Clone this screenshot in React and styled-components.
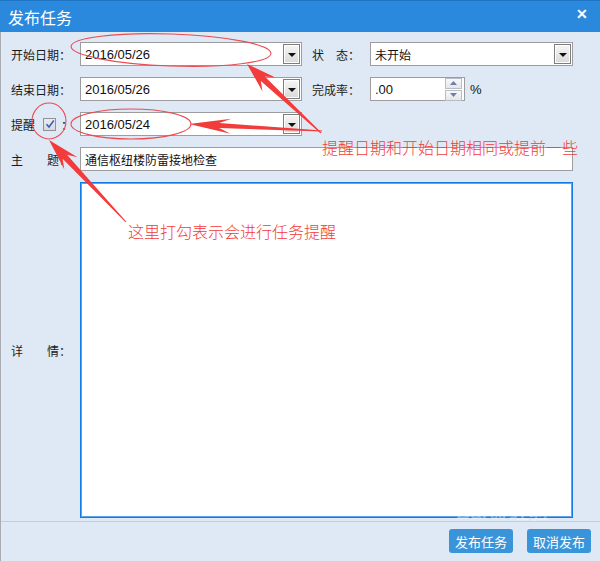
import React from 'react';
import styled, { createGlobalStyle } from 'styled-components';

const GlobalStyle = createGlobalStyle`
  html, body { margin: 0; padding: 0; }
  body {
    font-family: "Noto Sans CJK SC", "Liberation Sans", sans-serif;
    background: #dfe9f5;
  }
`;

const CJK = '"Noto Sans CJK SC", "Liberation Sans", sans-serif';
const LATIN = '"Liberation Sans", "Noto Sans CJK SC", sans-serif';

// arrow polygon with swept-back barbs, points computed from tail/tip
const arrowPoints = (tail, tip, headLen, headW, shaftW, tailW) => {
  const dx = tip[0] - tail[0];
  const dy = tip[1] - tail[1];
  const len = Math.hypot(dx, dy);
  const ux = dx / len, uy = dy / len;
  const nx = -uy, ny = ux;
  const jx = tip[0] - ux * headLen * 0.72, jy = tip[1] - uy * headLen * 0.72;
  const bx = tip[0] - ux * headLen, by = tip[1] - uy * headLen;
  const p = (x, y) => `${x.toFixed(1)},${y.toFixed(1)}`;
  return [
    p(tail[0] + nx * tailW / 2, tail[1] + ny * tailW / 2),
    p(jx + nx * shaftW / 2, jy + ny * shaftW / 2),
    p(bx + nx * headW / 2, by + ny * headW / 2),
    p(tip[0], tip[1]),
    p(bx - nx * headW / 2, by - ny * headW / 2),
    p(jx - nx * shaftW / 2, jy - ny * shaftW / 2),
    p(tail[0] - nx * tailW / 2, tail[1] - ny * tailW / 2),
  ].join(' ');
};

const Arrow = ({ d }) => (
  <polygon points={arrowPoints(...d)} fill="#f23b3b" />
);

const App = () => {
  return (
    <>
      <GlobalStyle />
      <Window>
        <TitleBar>
          <Title>发布任务</Title>
          <Close>✕</Close>
        </TitleBar>
        <Body>
          <Form>
            <Label>
              <Spread w={48}><span>开</span><span>始</span><span>日</span><span>期</span></Spread>：
            </Label>
            <Field>
              <FieldText>2016/05/26</FieldText>
              <DropButton><Caret /></DropButton>
            </Field>
            <span />
            <Label>
              <Spread w={36}><span>状</span><span>态</span></Spread>：
            </Label>
            <Field>
              <FieldText cjk>未开始</FieldText>
              <DropButton><Caret /></DropButton>
            </Field>

            <Label>
              <Spread w={48}><span>结</span><span>束</span><span>日</span><span>期</span></Spread>：
            </Label>
            <Field>
              <FieldText>2016/05/26</FieldText>
              <DropButton><Caret /></DropButton>
            </Field>
            <span />
            <Label>
              <Spread w={36}><span>完</span><span>成</span><span>率</span></Spread>：
            </Label>
            <SpinRow>
              <Field w={95}>
                <FieldText>.00</FieldText>
                <Spinner>
                  <SpinBtn>
                    <svg width="7" height="4" viewBox="0 0 7 4"><path d="M0 4 L3.5 0 L7 4Z" fill="#6c7fae" /></svg>
                  </SpinBtn>
                  <SpinBtn>
                    <svg width="7" height="4" viewBox="0 0 7 4"><path d="M0 0 L3.5 4 L7 0Z" fill="#6c7fae" /></svg>
                  </SpinBtn>
                </Spinner>
              </Field>
              <Percent>%</Percent>
            </SpinRow>

            <Label>
              提醒
              <CheckBox>
                <svg width="10" height="10" viewBox="0 0 10 10">
                  <path d="M1.5 5.2 L4 8 L8.8 1.5" fill="none" stroke="#3d5fb8" strokeWidth="1.6" />
                </svg>
              </CheckBox>
              ：
            </Label>
            <Field>
              <FieldText>2016/05/24</FieldText>
              <DropButton><Caret /></DropButton>
            </Field>
            <Filler />

            <Label>
              <Spread w={48}><span>主</span><span>题</span></Spread>：
            </Label>
            <Field span>
              <FieldText cjk>通信枢纽楼防雷接地检查</FieldText>
            </Field>

            <Label>
              <Spread w={48}><span>详</span><span>情</span></Spread>：
            </Label>
            <TextArea />
          </Form>
          <Footer>
            <Button>发布任务</Button>
            <Button>取消发布</Button>
          </Footer>
        </Body>

        <Watermark>
          <span>Bai</span><Paw>du</Paw><span>经验</span>
        </Watermark>

        <Overlay width="600" height="561" viewBox="0 0 600 561">
          <g fill="none" stroke="#ea4a52" strokeWidth="1.1">
            <ellipse cx="171" cy="50" rx="100" ry="16" transform="rotate(2 171 50)" />
            <ellipse cx="131" cy="124" rx="60" ry="15" />
            <ellipse cx="49" cy="121" rx="17" ry="18" />
          </g>
          <Arrow d={[[321, 133], [247, 64], 30, 19, 6, 1]} />
          <Arrow d={[[322, 131], [189, 124], 42, 15, 5, 1]} />
          <Arrow d={[[126, 222], [49, 140], 32, 18, 6, 1]} />
        </Overlay>
        <Note1>提醒日期和开始日期相同或提前一些</Note1>
        <Note2>这里打勾表示会进行任务提醒</Note2>
      </Window>
    </>
  );
};

export default App;

// STYLED CSS
const Window = styled.div`
  position: relative;
  width: 600px;
  height: 561px;
  display: flex;
  flex-direction: column;
  background: #dfe9f5;
  overflow: hidden;
`;

const TitleBar = styled.div`
  height: 32px;
  flex-shrink: 0;
  display: flex;
  align-items: center;
  justify-content: space-between;
  padding: 0 12px 0 8px;
  background: #2a89dd;
  border-top: 1px solid #1f74c4;
  box-sizing: border-box;
`;

const Title = styled.div`
  font-family: ${CJK};
  font-size: 16px;
  color: #ffffff;
`;

const Close = styled.div`
  font-family: ${LATIN};
  font-size: 14px;
  font-weight: bold;
  color: #ffffff;
  margin-top: -6px;
`;

const Body = styled.div`
  flex: 1;
  display: flex;
  flex-direction: column;
  border-left: 1px solid #a9adb3;
`;

const Form = styled.div`
  display: grid;
  grid-template-columns: 69px 222px 10px 58px 203px;
  grid-template-rows: 24px 24px 24px 24px 336px;
  row-gap: 11px;
  padding: 10px 0 0 10px;
  align-items: center;
`;

const Label = styled.div`
  display: flex;
  align-items: center;
  font-family: ${CJK};
  font-size: 12px;
  color: #1a1a1a;
  height: 100%;
`;

const Spread = styled.span`
  display: flex;
  justify-content: space-between;
  width: ${(p) => p.w}px;
`;

const Field = styled.div`
  display: flex;
  align-items: center;
  box-sizing: border-box;
  height: 24px;
  width: ${(p) => (p.w ? `${p.w}px` : 'auto')};
  grid-column: ${(p) => (p.span ? '2 / 6' : 'auto')};
  background: #ffffff;
  border: 1px solid #9d9d9d;
  padding-left: 4px;
`;

const FieldText = styled.div`
  flex: 1;
  font-family: ${(p) => (p.cjk ? CJK : LATIN)};
  font-size: ${(p) => (p.cjk ? '12px' : '13px')};
  color: #111;
`;

const DropButton = styled.div`
  width: 15px;
  height: 18px;
  margin-right: 1px;
  border: 1px solid #7d7d7d;
  box-shadow: inset 0 0 0 1px #ffffff;
  background: linear-gradient(#f6f6f6, #d9d9d9);
  display: flex;
  align-items: center;
  justify-content: center;
`;

const Caret = styled.div`
  width: 0;
  height: 0;
  border-left: 4px solid transparent;
  border-right: 4px solid transparent;
  border-top: 4px solid #111;
  margin-top: 1px;
`;

const SpinRow = styled.div`
  display: flex;
  align-items: center;
  gap: 5px;
`;

const Spinner = styled.div`
  display: flex;
  flex-direction: column;
  gap: 1px;
  margin-right: 2px;
`;

const SpinBtn = styled.div`
  width: 15px;
  height: 9px;
  border: 1px solid #b9bcc3;
  background: linear-gradient(#f8f8f8, #e4e6ea);
  display: flex;
  align-items: center;
  justify-content: center;
`;

const Percent = styled.span`
  font-family: ${LATIN};
  font-size: 13px;
  color: #111;
`;

const CheckBox = styled.span`
  width: 11px;
  height: 11px;
  margin: 0 5px 0 8px;
  border: 1px solid #8f9296;
  background: linear-gradient(#e8eaee, #d6d9de);
  display: inline-flex;
  align-items: center;
  justify-content: center;
`;

const Filler = styled.span`
  grid-column: 3 / 6;
`;

const TextArea = styled.div`
  grid-column: 2 / 6;
  align-self: stretch;
  background: #ffffff;
  border: 1px solid #1478e6;
  box-shadow: inset 0 0 0 1px #5ea4ee;
`;

const Footer = styled.div`
  margin-top: 3px;
  flex: 1;
  border-top: 1px solid #c9cdd2;
  display: flex;
  justify-content: flex-end;
  align-items: flex-start;
  gap: 14px;
  padding: 7px 9px 0 0;
`;

const Button = styled.div`
  width: 64px;
  height: 24px;
  border-radius: 3px;
  background: #3a94da;
  color: #ffffff;
  font-family: ${CJK};
  font-size: 13px;
  display: flex;
  align-items: center;
  justify-content: center;
`;

const Watermark = styled.div`
  position: absolute;
  left: 456px;
  top: 500px;
  display: flex;
  align-items: baseline;
  font-family: ${LATIN};
  font-size: 20px;
  line-height: 24px;
  font-weight: bold;
  color: rgba(255, 255, 255, 0.4);
  pointer-events: none;
`;

const Paw = styled.span`
  font-size: 13px;
  margin: 0 3px;
`;

const Overlay = styled.svg`
  position: absolute;
  left: 0;
  top: 0;
  pointer-events: none;
`;

const Note = styled.div`
  position: absolute;
  font-family: ${CJK};
  font-size: 16px;
  font-weight: 300;
  color: #f23b3b;
  white-space: nowrap;
  pointer-events: none;
`;

const Note1 = styled(Note)`
  left: 322px;
  top: 135px;
`;

const Note2 = styled(Note)`
  left: 128px;
  top: 219px;
`;
